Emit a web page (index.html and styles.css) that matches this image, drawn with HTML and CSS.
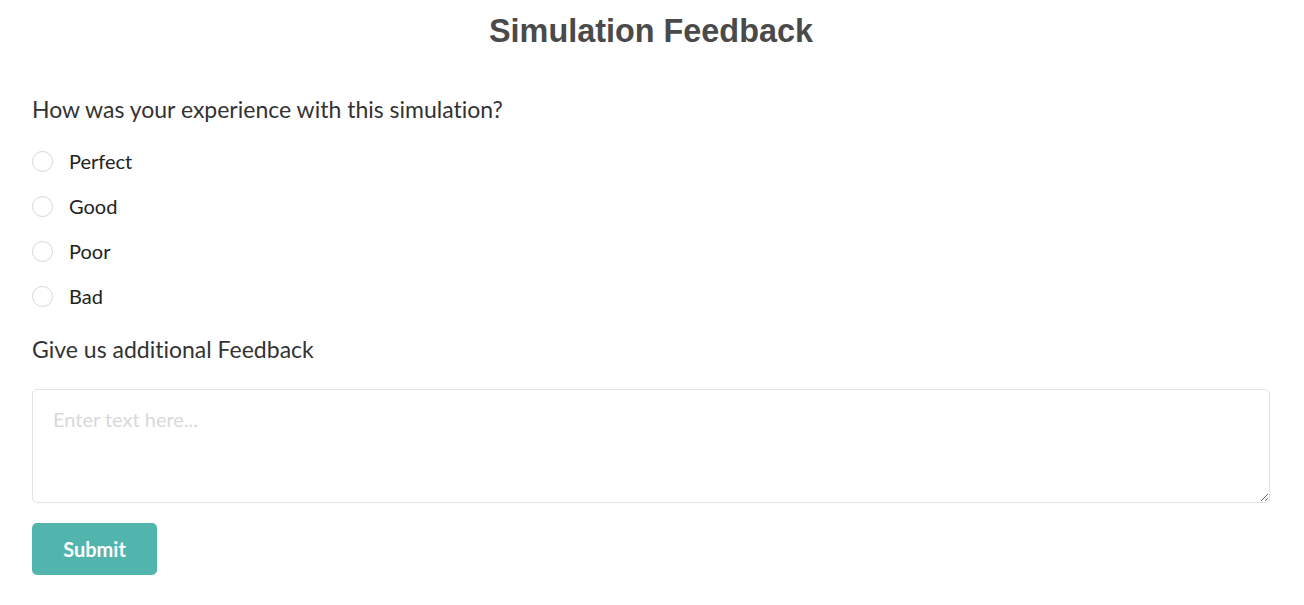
FILE: index.html
```html
<!DOCTYPE html>
<html lang="en">
<head>
<meta charset="utf-8">
<title>Simulation Feedback</title>
<link rel="stylesheet" href="styles.css">
</head>
<body>
<main class="page">
  <h1 class="title">Simulation Feedback</h1>
  <form class="form">
    <p class="question">How was your experience with this simulation?</p>
    <div class="options">
      <label class="option"><input type="radio" name="exp" class="radio"><span>Perfect</span></label>
      <label class="option"><input type="radio" name="exp" class="radio"><span>Good</span></label>
      <label class="option"><input type="radio" name="exp" class="radio"><span>Poor</span></label>
      <label class="option"><input type="radio" name="exp" class="radio"><span>Bad</span></label>
    </div>
    <p class="question question-2">Give us additional Feedback</p>
    <textarea class="feedback" placeholder="Enter text here..."></textarea>
    <button type="button" class="submit">Submit</button>
  </form>
</main>
</body>
</html>
```

FILE: styles.css
```css
* { box-sizing: border-box; }
html, body { margin: 0; padding: 0; background: #fff; }
body {
  font-family: Lato, "Open Sans", sans-serif;
  color: #333;
  font-variant-ligatures: none;
}
.page { padding: 10px 34px 0 32px; }
.title {
  margin: 0;
  text-align: center;
  font-family: "Liberation Sans", Arial, sans-serif;
  font-weight: 700;
  font-size: 32.4px;
  line-height: 42px;
  color: #4a4a4a;
}
.form { display: flex; flex-direction: column; align-items: flex-start; }
.question {
  margin: 42px 0 0 0;
  font-size: 23px;
  line-height: 30px;
  color: #333;
}
.options { display: flex; flex-direction: column; gap: 15px; margin-top: 22px; }
.option {
  display: flex;
  align-items: center;
  height: 30px;
  font-size: 20px;
  color: #222;
  cursor: pointer;
}
.radio {
  appearance: none;
  -webkit-appearance: none;
  margin: 0 16px 0 0;
  width: 21px;
  height: 21px;
  border: 1px solid #d6d6d6;
  border-radius: 50%;
  background: #fff;
}
.question-2 { margin-top: 23px; }
.feedback {
  display: block;
  width: 100%;
  height: 114px;
  margin-top: 25px;
  padding: 17px 20px;
  border: 1px solid #e2e2e2;
  border-radius: 5px;
  font-family: Lato, sans-serif;
  font-size: 20px;
  color: #333;
  resize: vertical;
  outline: none;
}
.feedback::placeholder { color: #d9d9d9; }
.submit {
  margin-top: 20px;
  width: 125px;
  height: 52px;
  border: none;
  border-radius: 5px;
  background: #52b5ad;
  color: #fff;
  font-family: Lato, sans-serif;
  font-weight: 700;
  font-size: 20px;
  cursor: pointer;
}
```
